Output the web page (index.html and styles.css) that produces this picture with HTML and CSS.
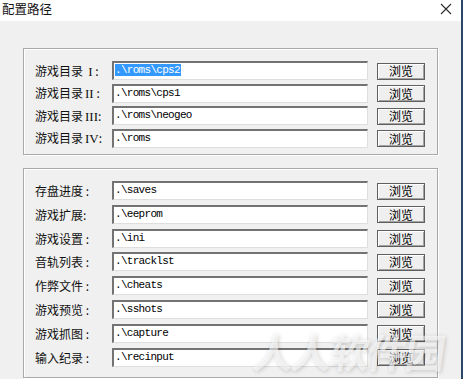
FILE: index.html
```html
<!DOCTYPE html>
<html lang="zh-CN">
<head>
  <meta charset="UTF-8" />
  <meta name="viewport" content="width=device-width, initial-scale=1.0" />
  <title>配置路径</title>
  <link rel="stylesheet" href="styles.css">
</head>
<body>
  <div class="frame">
    <div class="window">
      <div class="titlebar">
        <span class="title">配置路径</span>
        <svg class="close" width="12" height="12" viewBox="0 0 12 12">
          <path d="M1 1 L11 11 M11 1 L1 11" stroke="#2b2b2b" stroke-width="1.1" fill="none" />
        </svg>
      </div>

      <div class="content">
        <div class="group group-roms">
          <div class="row">
            <label>游戏目录<span class="num">&nbsp;I</span> :</label>
            <div class="field"><span class="sel">.\roms\cps2</span></div>
            <button>浏览</button>
          </div>
          <div class="row">
            <label>游戏目录<span class="num">II</span> :</label>
            <div class="field">.\roms\cps1</div>
            <button>浏览</button>
          </div>
          <div class="row">
            <label>游戏目录<span class="num">III</span>:</label>
            <div class="field">.\roms\neogeo</div>
            <button>浏览</button>
          </div>
          <div class="row">
            <label>游戏目录<span class="num">IV</span>:</label>
            <div class="field">.\roms</div>
            <button>浏览</button>
          </div>
        </div>

        <div class="group group-misc">
          <div class="row">
            <label>存盘进度 :</label>
            <div class="field">.\saves</div>
            <button>浏览</button>
          </div>
          <div class="row">
            <label>游戏扩展:</label>
            <div class="field">.\eeprom</div>
            <button>浏览</button>
          </div>
          <div class="row">
            <label>游戏设置 :</label>
            <div class="field">.\ini</div>
            <button>浏览</button>
          </div>
          <div class="row">
            <label>音轨列表 :</label>
            <div class="field">.\tracklst</div>
            <button>浏览</button>
          </div>
          <div class="row">
            <label>作弊文件 :</label>
            <div class="field">.\cheats</div>
            <button>浏览</button>
          </div>
          <div class="row">
            <label>游戏预览 :</label>
            <div class="field">.\sshots</div>
            <button>浏览</button>
          </div>
          <div class="row">
            <label>游戏抓图 :</label>
            <div class="field">.\capture</div>
            <button>浏览</button>
          </div>
          <div class="row">
            <label>输入纪录 :</label>
            <div class="field">.\recinput</div>
            <button>浏览</button>
          </div>
        </div>
      </div>
    </div>
    <div class="edge"></div>
  </div>

  <div class="watermark">人人软件园</div>
</body>
</html>
```

FILE: styles.css
```css
body {
  margin: 0;
  width: 463px;
  height: 379px;
  overflow: hidden;
  background: #f0f0f0;
  font-family: "Noto Sans CJK SC", "Noto Sans", sans-serif;
  font-size: 12px;
  color: #111;
  position: relative;
}

.frame {
  display: flex;
  height: 379px;
}

.window {
  width: 461px;
  display: flex;
  flex-direction: column;
}

.edge {
  width: 2px;
  background: #2c4766;
}

.titlebar {
  height: 21px;
  background: #fff;
  display: flex;
  align-items: center;
  justify-content: space-between;
  padding: 0 9px 0 2px;
}

.title {
  font-size: 12.5px;
  line-height: 16px;
  margin-top: -4px;
}

.close {
  margin-top: -3px;
}

.content {
  padding: 27px 0 0 23px;
}

.group {
  width: 415px;
  box-sizing: border-box;
  border: 1px solid #a9a9a9;
  box-shadow: inset 1px 1px 0 #fff, 1px 1px 0 #fff;
  display: flex;
  flex-direction: column;
  padding-left: 11px;
}

.group-roms {
  height: 107px;
  padding-top: 12px;
  gap: 3.5px;
}

.group-misc {
  margin-top: 13px;
  height: 210px;
  padding-top: 12px;
  gap: 4.8px;
}

.row {
  display: flex;
  align-items: center;
  height: 19px;
}

.row label {
  width: 77px;
  white-space: nowrap;
  line-height: 19px;
}

.num {
  font-family: "Liberation Serif", serif;
  font-size: 13px;
  margin-left: 2px;
}

.field {
  width: 256px;
  height: 19px;
  box-sizing: border-box;
  background: #fff;
  border-top: 2px solid #737373;
  border-left: 2px solid #737373;
  border-right: 1px solid #dedede;
  border-bottom: 1px solid #dedede;
  padding-left: 1px;
  font-family: "Liberation Mono", "DejaVu Sans Mono", monospace;
  font-size: 11px;
  letter-spacing: -0.7px;
  line-height: 15px;
  color: #000;
  white-space: nowrap;
}

.sel {
  background: #3399ff;
  color: #fff;
  display: inline-block;
  line-height: 12px;
  padding-right: 1px;
}

button {
  margin-left: 9px;
  width: 48px;
  height: 17px;
  margin-top: 1px;
  padding: 0;
  background: #efefef;
  border: 1px solid #5f5f5f;
  box-shadow: inset 1px 1px 0 #fff, inset -1px -1px 0 #a3a3a3;
  font-family: "Noto Sans CJK SC", sans-serif;
  font-size: 12px;
  line-height: 14px;
  color: #000;
}

.watermark {
  position: absolute;
  left: 254px;
  top: 322px;
  font-size: 40px;
  font-weight: bold;
  letter-spacing: -2px;
  color: rgba(255, 255, 255, 0.6);
  text-shadow: 1px 1px 4px rgba(0, 0, 0, 0.18);
  transform: skewX(-8deg);
  white-space: nowrap;
}
```
